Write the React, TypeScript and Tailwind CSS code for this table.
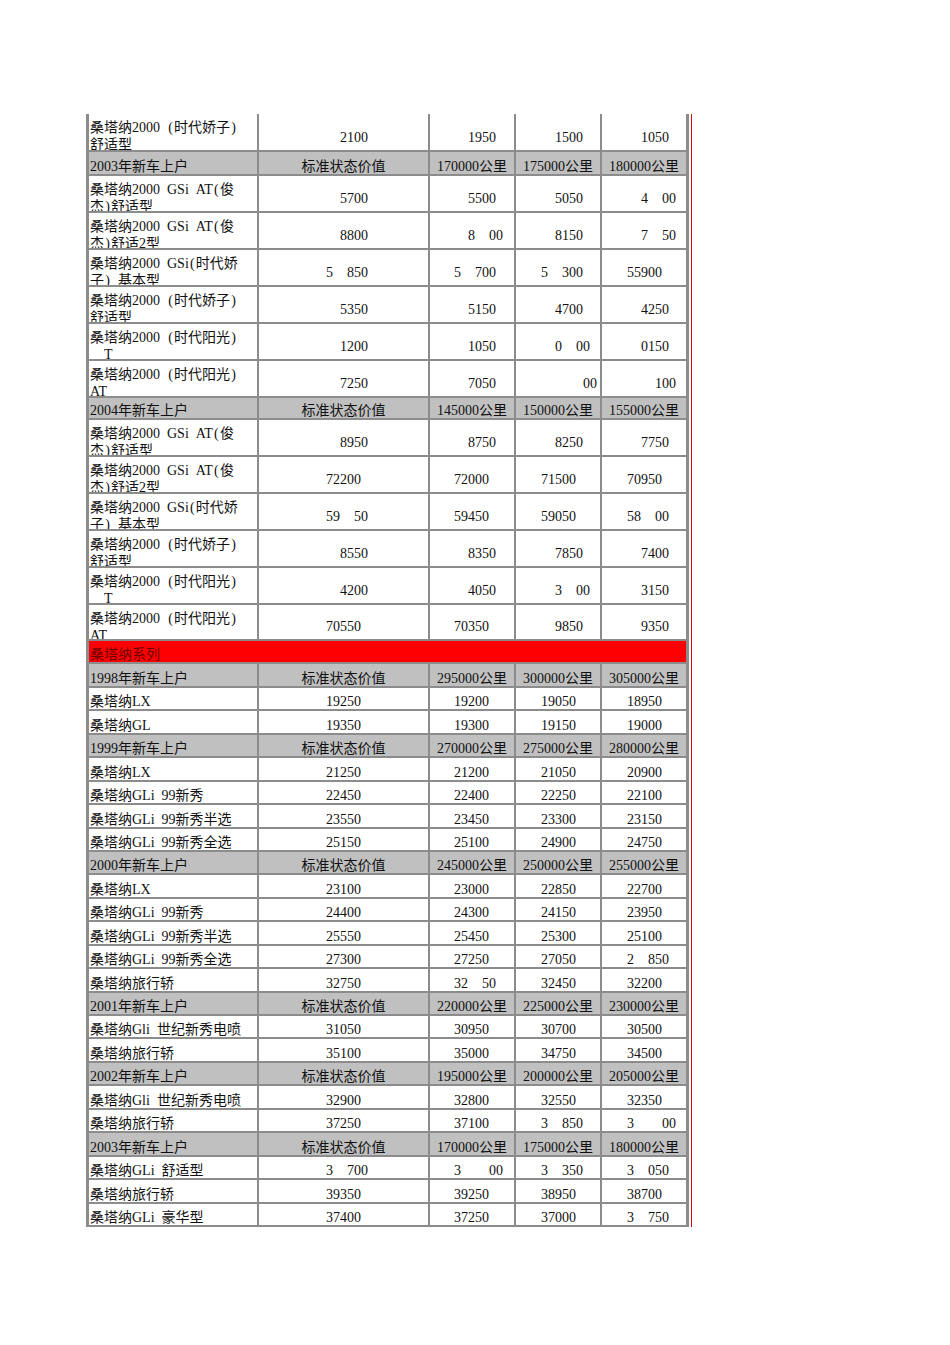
import React from 'react';

type Row =
  | { kind: 'tall'; label: [string, string]; vals: string[]; h: string }
  | { kind: 'short'; label: string; vals: string[] }
  | { kind: 'head'; year: string; km: string[]; h: string }
  | { kind: 'red'; label: string };

const SHORT_H = 'h-[23.44px]';

const rows: Row[] = [
  { kind: 'tall', h: 'h-[38px]', label: ['桑塔纳2000 (时代娇子)', '舒适型'], vals: ['?2100', '?1950', '?1500', '?1050'] },
  { kind: 'head', h: 'h-[24px]', year: '2003', km: ['170000', '175000', '180000'] },
  { kind: 'tall', h: 'h-[37px]', label: ['桑塔纳2000 GSi AT(俊', '杰)舒适型'], vals: ['?5700', '?5500', '?5050', '?4?00'] },
  { kind: 'tall', h: 'h-[37px]', label: ['桑塔纳2000 GSi AT(俊', '杰)舒适2型'], vals: ['?8800', '?8?00', '?8150', '?7?50'] },
  { kind: 'tall', h: 'h-[37px]', label: ['桑塔纳2000 GSi(时代娇', '子) 基本型'], vals: ['5?850', '5?700', '5?300', '55900'] },
  { kind: 'tall', h: 'h-[37px]', label: ['桑塔纳2000 (时代娇子)', '舒适型'], vals: ['?5350', '?5150', '?4700', '?4250'] },
  { kind: 'tall', h: 'h-[37px]', label: ['桑塔纳2000 (时代阳光)', '  T'], vals: ['?1200', '?1050', '?0?00', '?0150'] },
  { kind: 'tall', h: 'h-[37px]', label: ['桑塔纳2000 (时代阳光)', 'AT'], vals: ['?7250', '?7050', '???00', '??100'] },
  { kind: 'head', h: 'h-[22px]', year: '2004', km: ['145000', '150000', '155000'] },
  { kind: 'tall', h: 'h-[37px]', label: ['桑塔纳2000 GSi AT(俊', '杰)舒适型'], vals: ['?8950', '?8750', '?8250', '?7750'] },
  { kind: 'tall', h: 'h-[37px]', label: ['桑塔纳2000 GSi AT(俊', '杰)舒适2型'], vals: ['72200', '72000', '71500', '70950'] },
  { kind: 'tall', h: 'h-[37px]', label: ['桑塔纳2000 GSi(时代娇', '子) 基本型'], vals: ['59?50', '59450', '59050', '58?00'] },
  { kind: 'tall', h: 'h-[37px]', label: ['桑塔纳2000 (时代娇子)', '舒适型'], vals: ['?8550', '?8350', '?7850', '?7400'] },
  { kind: 'tall', h: 'h-[37px]', label: ['桑塔纳2000 (时代阳光)', '  T'], vals: ['?4200', '?4050', '?3?00', '?3150'] },
  { kind: 'tall', h: 'h-[36px]', label: ['桑塔纳2000 (时代阳光)', 'AT'], vals: ['70550', '70350', '?9850', '?9350'] },
  { kind: 'red', label: '桑塔纳系列' },
  { kind: 'head', h: SHORT_H, year: '1998', km: ['295000', '300000', '305000'] },
  { kind: 'short', label: '桑塔纳LX', vals: ['19250', '19200', '19050', '18950'] },
  { kind: 'short', label: '桑塔纳GL', vals: ['19350', '19300', '19150', '19000'] },
  { kind: 'head', h: SHORT_H, year: '1999', km: ['270000', '275000', '280000'] },
  { kind: 'short', label: '桑塔纳LX', vals: ['21250', '21200', '21050', '20900'] },
  { kind: 'short', label: '桑塔纳GLi 99新秀', vals: ['22450', '22400', '22250', '22100'] },
  { kind: 'short', label: '桑塔纳GLi 99新秀半选', vals: ['23550', '23450', '23300', '23150'] },
  { kind: 'short', label: '桑塔纳GLi 99新秀全选', vals: ['25150', '25100', '24900', '24750'] },
  { kind: 'head', h: SHORT_H, year: '2000', km: ['245000', '250000', '255000'] },
  { kind: 'short', label: '桑塔纳LX', vals: ['23100', '23000', '22850', '22700'] },
  { kind: 'short', label: '桑塔纳GLi 99新秀', vals: ['24400', '24300', '24150', '23950'] },
  { kind: 'short', label: '桑塔纳GLi 99新秀半选', vals: ['25550', '25450', '25300', '25100'] },
  { kind: 'short', label: '桑塔纳GLi 99新秀全选', vals: ['27300', '27250', '27050', '2?850'] },
  { kind: 'short', label: '桑塔纳旅行轿', vals: ['32750', '32?50', '32450', '32200'] },
  { kind: 'head', h: SHORT_H, year: '2001', km: ['220000', '225000', '230000'] },
  { kind: 'short', label: '桑塔纳Gli 世纪新秀电喷', vals: ['31050', '30950', '30700', '30500'] },
  { kind: 'short', label: '桑塔纳旅行轿', vals: ['35100', '35000', '34750', '34500'] },
  { kind: 'head', h: SHORT_H, year: '2002', km: ['195000', '200000', '205000'] },
  { kind: 'short', label: '桑塔纳Gli 世纪新秀电喷', vals: ['32900', '32800', '32550', '32350'] },
  { kind: 'short', label: '桑塔纳旅行轿', vals: ['37250', '37100', '3?850', '3??00'] },
  { kind: 'head', h: SHORT_H, year: '2003', km: ['170000', '175000', '180000'] },
  { kind: 'short', label: '桑塔纳GLi 舒适型', vals: ['3?700', '3??00', '3?350', '3?050'] },
  { kind: 'short', label: '桑塔纳旅行轿', vals: ['39350', '39250', '38950', '38700'] },
  { kind: 'short', label: '桑塔纳GLi 豪华型', vals: ['37400', '37250', '37000', '3?750'] },
];

const LINE = 'border-[#8c8c8c]';
const GRID = 'grid grid-cols-[170px_171px_86px_86px_84px] border-b-2';
const NUM_PAD = ['pl-[67px]', 'pl-[24px]', 'pl-[25px]', 'pl-[25px]'];

// '?' stands for a digit the original font could not draw: it leaves a gap
function Num({ v }: { v: string }) {
  return (
    <>
      {v.split(/(\?)/).map((c, i) =>
        c === '?' ? <span key={i} className="inline-block w-[14px]" /> : c
      )}
    </>
  );
}

// spaces and brackets took a full half-width cell in the original font
function Label({ text }: { text: string }) {
  return (
    <span className="whitespace-nowrap">
      {text.split(/([ ()])/).map((c, i) => {
        if (c === ' ') return <span key={i} className="inline-block w-[7px]" />;
        if (c === '(' || c === ')')
          return (
            <span key={i} className="inline-block w-[7px] text-center">
              {c}
            </span>
          );
        return c;
      })}
    </span>
  );
}

function TableRow({ row }: { row: Row }) {
  if (row.kind === 'red') {
    return (
      <div className={`flex ${SHORT_H} items-end border-b-2 ${LINE} bg-[#ff0000] pl-[1px] text-[#6e0000]`}>
        <span className="leading-[14px]">{row.label}</span>
      </div>
    );
  }

  if (row.kind === 'head') {
    return (
      <div className={`${GRID} ${LINE} ${row.h} bg-[#c0c0c0]`}>
        <div className={`flex items-end overflow-hidden border-r-2 ${LINE} pl-[1px] leading-[14px]`}>
          {row.year}年新车上户
        </div>
        <div className={`flex items-end justify-center overflow-hidden border-r-2 ${LINE} leading-[14px]`}>
          标准状态价值
        </div>
        {row.km.map((k, i) => (
          <div
            key={k}
            className={`flex items-end justify-center overflow-hidden whitespace-nowrap ${i < 2 ? `border-r-2 ${LINE}` : ''} leading-[14px]`}
          >
            {k}公里
          </div>
        ))}
      </div>
    );
  }

  if (row.kind === 'tall') {
    return (
      <div className={`${GRID} ${LINE} ${row.h}`}>
        <div className={`flex flex-col overflow-hidden border-r-2 ${LINE} pl-[1px] pt-[5px] leading-[17px]`}>
          <Label text={row.label[0]} />
          <Label text={row.label[1]} />
        </div>
        {row.vals.map((v, i) => (
          <div
            key={i}
            className={`flex items-end overflow-hidden whitespace-nowrap ${i < 3 ? `border-r-2 ${LINE}` : ''} ${NUM_PAD[i]} pb-[4px] leading-[17px]`}
          >
            <Num v={v} />
          </div>
        ))}
      </div>
    );
  }

  return (
    <div className={`${GRID} ${LINE} ${SHORT_H}`}>
      <div className={`flex items-end overflow-hidden border-r-2 ${LINE} pl-[1px] leading-[14px]`}>
        <Label text={row.label} />
      </div>
      {row.vals.map((v, i) => (
        <div
          key={i}
          className={`flex items-end overflow-hidden whitespace-nowrap ${i < 3 ? `border-r-2 ${LINE}` : ''} ${NUM_PAD[i]} leading-[14px]`}
        >
          <Num v={v} />
        </div>
      ))}
    </div>
  );
}

export default function App() {
  return (
    <div className="min-h-[1345px] w-[950px] bg-white pl-[86px] pt-[114px] font-['Liberation_Serif','Noto_Sans_CJK_SC',serif] text-[14px] text-[#111]">
      <div className="flex items-stretch">
        <div className={`w-[603px] border-x-[3px] ${LINE}`}>
          {rows.map((r, i) => (
            <TableRow key={i} row={r} />
          ))}
        </div>
        <div className="ml-[2px] w-px bg-[#e00000]" />
      </div>
    </div>
  );
}
